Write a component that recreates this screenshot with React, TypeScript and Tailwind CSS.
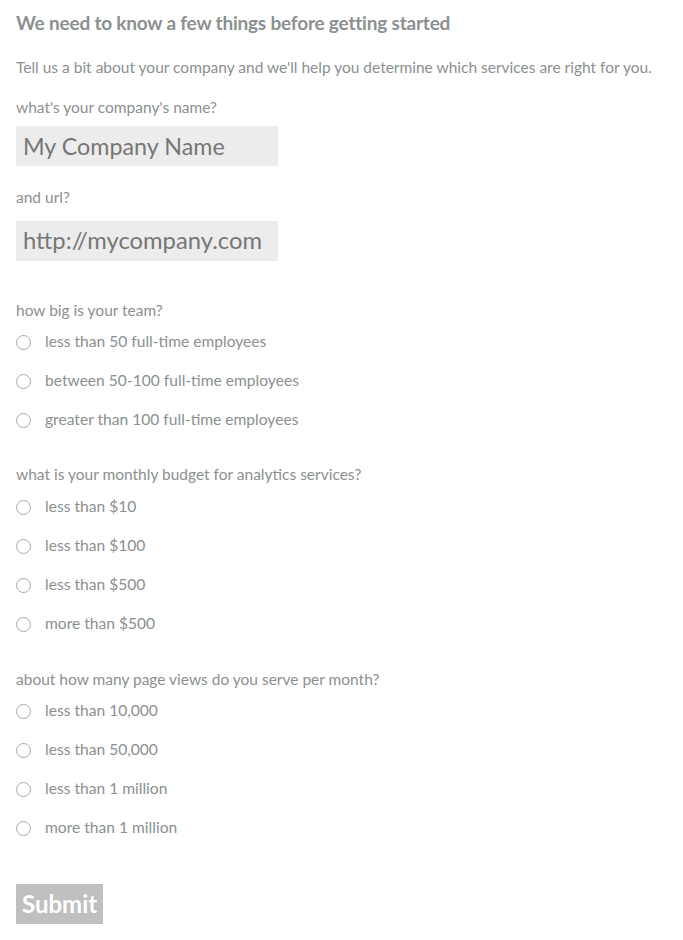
const teamOptions = [
  "less than 50 full-time employees",
  "between 50-100 full-time employees",
  "greater than 100 full-time employees",
];

const budgetOptions = ["less than $10", "less than $100", "less than $500", "more than $500"];

const viewOptions = ["less than 10,000", "less than 50,000", "less than 1 million", "more than 1 million"];

const RadioGroup = ({ name, options }: { name: string; options: string[] }) => (
  <div className="flex flex-col gap-[17px]">
    {options.map((opt) => (
      <label key={opt} className="flex items-center h-[22px] text-[15.6px] text-[#8b9090] cursor-pointer">
        <span className="w-[15px] h-[15px] rounded-full border border-[#a9a9a9] bg-white mr-[14px]" />
        <input type="radio" name={name} className="hidden" />
        {opt}
      </label>
    ))}
  </div>
);

export default function App() {
  return (
    <div className="bg-white min-h-screen px-4 pt-[12px] font-['Lato',sans-serif] text-[#8b9090]">
      <h1 className="text-[19px] font-bold leading-[22px] tracking-[-0.2px]">We need to know a few things before getting started</h1>
      <p className="mt-[22px] text-[15.5px] leading-[22px]">
        Tell us a bit about your company and we'll help you determine which services are right for you.
      </p>

      <p className="mt-[18px] text-[15.5px] leading-[22px]">what's your company's name?</p>
      <div className="mt-[8px] w-[262px] h-[40px] bg-[#ececec] flex items-center px-[7px] text-[23.3px] text-[#777]">
        My Company Name
      </div>

      <p className="mt-[20px] text-[15.5px] leading-[22px]">and url?</p>
      <div className="mt-[13px] w-[262px] h-[40px] bg-[#ececec] flex items-center px-[7px] text-[23.8px] text-[#777]">
        http://mycompany.com
      </div>

      <p className="mt-[38px] text-[15.5px] leading-[22px]">how big is your team?</p>
      <div className="mt-[10px]">
        <RadioGroup name="team" options={teamOptions} />
      </div>

      <p className="mt-[32px] text-[15.5px] leading-[22px]">what is your monthly budget for analytics services?</p>
      <div className="mt-[11px]">
        <RadioGroup name="budget" options={budgetOptions} />
      </div>

      <p className="mt-[33px] text-[15.5px] leading-[22px]">about how many page views do you serve per month?</p>
      <div className="mt-[10px]">
        <RadioGroup name="views" options={viewOptions} />
      </div>

      <button className="mt-[45px] h-[40px] px-[6px] bg-[#c0c0c0] text-white text-[24px] font-bold">Submit</button>
    </div>
  );
}
